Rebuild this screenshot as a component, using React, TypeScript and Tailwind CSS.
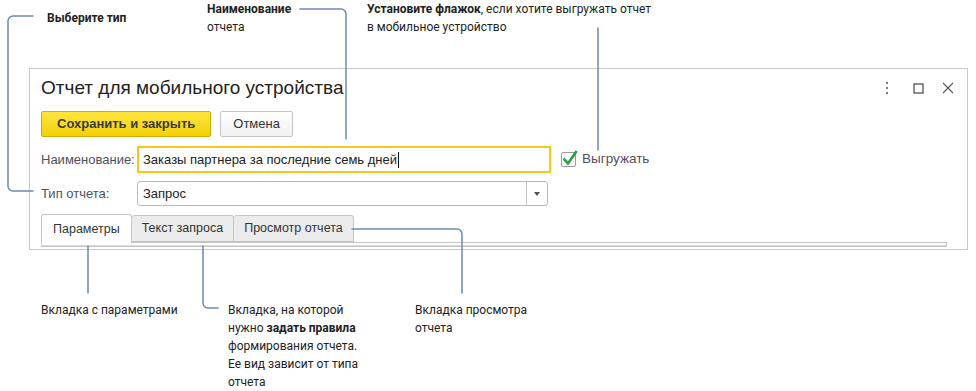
import { type ReactNode } from 'react';

const LINE = '#6d88b1';

// Callout text sits on a free canvas around the form window.
function Note({ className, children }: { className: string; children: ReactNode }) {
  return (
    <div
      className={`absolute text-[12px] leading-[18px] text-[#222] whitespace-nowrap ${className}`}
      style={{ fontFamily: 'Roboto, "Noto Sans", sans-serif' }}
    >
      {children}
    </div>
  );
}

function Connectors() {
  return (
    <svg className="pointer-events-none absolute inset-0" width={976} height={391} fill="none">
      <g stroke={LINE} strokeWidth={1.5} strokeLinecap="round">
        <path d="M33 16 H13 A5 5 0 0 0 8 21 V186 A5 5 0 0 0 13 191 H33" />
        <path d="M300 9 H341 A5 5 0 0 1 346 14 V139" />
        <path d="M598 28 V150" />
        <path d="M88 246 V293" />
        <path d="M203 246 V303 A5 5 0 0 0 208 308 H218" />
        <path d="M352 229 H457 A5 5 0 0 1 462 234 V293" />
      </g>
    </svg>
  );
}

function WindowIcons() {
  return (
    <div className="flex items-center">
      <svg width={4} height={12} className="mr-[24px]">
        <rect x={1} y={0} width={2} height={2} fill="#7a7a7a" />
        <rect x={1} y={5} width={2} height={2} fill="#7a7a7a" />
        <rect x={1} y={10} width={2} height={2} fill="#7a7a7a" />
      </svg>
      <svg width={11} height={11} className="mr-[18px]">
        <rect x={1} y={1} width={9} height={9} stroke="#444" strokeWidth={1.2} fill="none" />
      </svg>
      <svg width={12} height={12}>
        <path d="M1 1 L11 11 M11 1 L1 11" stroke="#555" strokeWidth={1.1} />
      </svg>
    </div>
  );
}

function Checkbox() {
  return (
    <div className="relative h-[15px] w-[15px] rounded-[2px] border border-[#9c9c9c] bg-white">
      <svg className="absolute -left-[1px] -top-[4px]" width={18} height={19} fill="none">
        <path d="M3.5 10.5 L7 14.5 L15 3" stroke="#22a33f" strokeWidth={2.6} strokeLinecap="square" />
      </svg>
    </div>
  );
}

function Tab({ label, active }: { label: string; active?: boolean }) {
  return active ? (
    <div className="relative z-10 -mb-[1px] flex h-[29px] items-center rounded-t-[3px] border border-b-0 border-[#c4c4c4] bg-white px-[11px] text-[12.5px] text-[#333]">
      {label}
    </div>
  ) : (
    <div className="flex h-[27px] items-center rounded-t-[3px] border border-l-0 border-[#c4c4c4] bg-[#ebebeb] px-[10px] text-[12.5px] text-[#333]">
      {label}
    </div>
  );
}

export default function App() {
  return (
    <div className="relative h-[391px] w-[976px] overflow-hidden bg-white">
      <div
        className="ml-[29px] mt-[68px] flex h-[182px] w-[939px] flex-col overflow-hidden border border-[#c9c9c9] bg-white pl-[11px] pr-[20px] text-[13px]"
        style={{ fontFamily: '"Liberation Sans", Arial, sans-serif' }}
      >
        <div className="flex h-[38px] items-center justify-between">
          <h1 className="text-[19px] text-[#222]">Отчет для мобильного устройства</h1>
          <div className="-mr-[7px]">
            <WindowIcons />
          </div>
        </div>

        <div className="mt-[4px] flex h-[26px] gap-[9px]">
          <button className="h-full rounded-[2px] border border-[#cfae00] bg-gradient-to-b from-[#ffe53a] to-[#f2d000] px-[15px] font-bold text-[#3a3a3a]">
            Сохранить и закрыть
          </button>
          <button className="h-full rounded-[2px] border border-[#c4c4c4] bg-gradient-to-b from-white to-[#f1f1f1] px-[12px] text-[#333]">
            Отмена
          </button>
        </div>

        <div className="mt-[9px] flex h-[27px] items-center">
          <span className="w-[96px] text-[#4f4f5c]">Наименование:</span>
          <div className="flex h-full w-[414px] items-center border-2 border-[#f6c71e] px-[4px] text-[#222]">
            Заказы партнера за последние семь дней
            <span className="ml-[1px] h-[16px] w-[1px] bg-[#111]" />
          </div>
          <div className="ml-[10px] flex items-center gap-[6px]">
            <Checkbox />
            <span className="text-[13.5px] text-[#4f4f5c]">Выгружать</span>
          </div>
        </div>

        <div className="mt-[8px] flex h-[25px] items-center">
          <span className="w-[96px] text-[#4f4f5c]">Тип отчета:</span>
          <div className="flex h-full w-[411px] items-center rounded-[3px] border border-[#b9b9b9]">
            <span className="flex-1 pl-[5px] text-[#222]">Запрос</span>
            <div className="flex h-full w-[21px] items-center justify-center border-l border-[#c4c4c4]">
              <svg width={6} height={4}>
                <path d="M0 0 H6 L3 4 Z" fill="#555" />
              </svg>
            </div>
          </div>
        </div>

        <div className="mt-[8px] flex items-end">
          <Tab label="Параметры" active />
          <Tab label="Текст запроса" />
          <Tab label="Просмотр отчета" />
        </div>
        <div className="flex-1 border border-[#c4c4c4]">
          <div className="mt-[2px] border-t border-[#dcdcdc]" />
        </div>
        <div className="h-[2px] shrink-0" />
      </div>

      <Connectors />

      <Note className="left-[47px] top-[9px] font-bold">Выберите тип</Note>
      <Note className="left-[207px] top-0">
        <b>Наименование</b>
        <br />
        отчета
      </Note>
      <Note className="left-[367px] top-0">
        <b>Установите флажок</b>, если хотите выгружать отчет
        <br />в мобильное устройство
      </Note>
      <Note className="left-[41px] top-[301px]">Вкладка с параметрами</Note>
      <Note className="left-[228px] top-[301px]">
        Вкладка, на которой
        <br />
        нужно <b>задать правила</b>
        <br />
        формирования отчета.
        <br />
        Ее вид зависит от типа
        <br />
        отчета
      </Note>
      <Note className="left-[415px] top-[301px]">
        Вкладка просмотра
        <br />
        отчета
      </Note>
    </div>
  );
}
